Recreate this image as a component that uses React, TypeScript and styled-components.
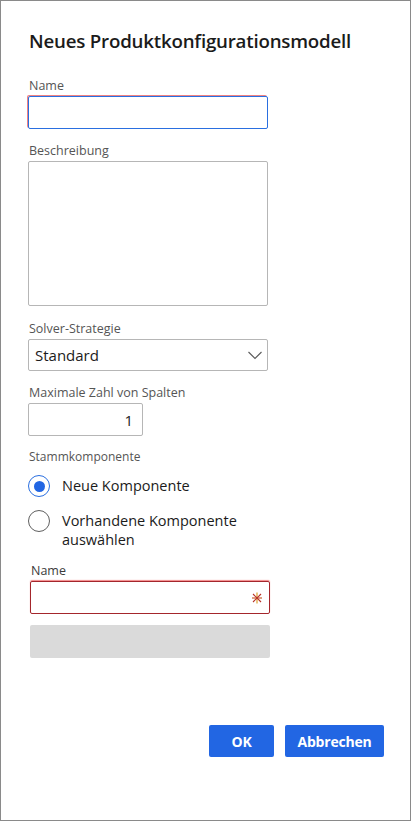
import React from 'react';
import styled, { createGlobalStyle } from 'styled-components';

const GlobalStyle = createGlobalStyle`
  html, body {
    margin: 0;
    padding: 0;
    background: #ffffff;
  }
  * {
    box-sizing: border-box;
  }
  body {
    font-family: "Open Sans", "Noto Sans", sans-serif;
    color: #1b1b1b;
  }
`;

const Dialog = styled.div`
  width: 411px;
  height: 821px;
  border: 1px solid #8a8a8a;
  background: #ffffff;
  display: flex;
  flex-direction: column;
  padding: 0 0 0 27px;
`;

const Title = styled.h1`
  margin: 26px 0 21px 1px;
  font-size: 18.7px;
  line-height: 28px;
  font-weight: 600;
  color: #1b1b1b;
  letter-spacing: -0.2px;
`;

const Field = styled.div<{ $gap?: number; $indent?: number }>`
  display: flex;
  flex-direction: column;
  margin-top: ${(p) => p.$gap ?? 0}px;
  margin-left: ${(p) => p.$indent ?? 0}px;
`;

const Label = styled.label<{ $dark?: boolean }>`
  font-size: 12.5px;
  line-height: 19px;
  color: ${(p) => (p.$dark ? '#3b3b3b' : '#555555')};
  margin-bottom: 1px;
  margin-left: 1px;
`;

const TextInput = styled.div<{ $width?: number; $state?: 'focus' | 'error' }>`
  position: relative;
  width: ${(p) => p.$width ?? 240}px;
  height: 33px;
  border-radius: 2px;
  border: 1px solid
    ${(p) => (p.$state === 'focus' ? '#2a6fe0' : p.$state === 'error' ? '#a4262c' : '#b6b6b6')};
  box-shadow: ${(p) =>
    p.$state === 'focus'
      ? '-1px -1px 0 0 rgba(235, 90, 90, 0.75)'
      : p.$state === 'error'
      ? '0 -1px 1px 0 rgba(235, 60, 60, 0.6)'
      : 'none'};
  display: flex;
  align-items: center;
  justify-content: flex-end;
  padding: 0 9px;
  font-size: 15px;
  color: #1b1b1b;
`;

const TextArea = styled.div`
  width: 240px;
  height: 145px;
  border: 1px solid #b6b6b6;
  border-radius: 2px;
`;

const Select = styled.div`
  width: 240px;
  height: 32px;
  border: 1px solid #b6b6b6;
  border-radius: 2px;
  display: flex;
  align-items: center;
  justify-content: space-between;
  padding: 0 4px 0 6px;
  font-size: 15px;
  color: #1b1b1b;
`;

const Legend = styled.div`
  font-size: 12px;
  line-height: 17px;
  color: #555555;
  margin-top: 12px;
  margin-left: 1px;
`;

const RadioGroup = styled.div`
  display: flex;
  flex-direction: column;
  gap: 13px;
  margin-top: 10px;
`;

const RadioRow = styled.div`
  display: flex;
  align-items: flex-start;
  gap: 12px;
`;

const RadioCircle = styled.span<{ $checked?: boolean }>`
  flex: none;
  width: 22px;
  height: 22px;
  border-radius: 50%;
  border: 1px solid ${(p) => (p.$checked ? '#2a6fe0' : '#5f5f5f')};
  display: flex;
  align-items: center;
  justify-content: center;
  &::after {
    content: '';
    width: 11px;
    height: 11px;
    border-radius: 50%;
    background: ${(p) => (p.$checked ? '#2266e3' : 'transparent')};
  }
`;

const RadioText = styled.span`
  font-size: 14.5px;
  line-height: 19px;
  color: #1b1b1b;
  padding-top: 1px;
  max-width: 200px;
`;

const Placeholder = styled.div`
  width: 240px;
  height: 33px;
  margin-top: 11px;
  margin-left: 2px;
  background: #dadada;
  border-radius: 2px;
`;

const Footer = styled.div`
  margin-top: auto;
  margin-bottom: 63px;
  padding-right: 26px;
  display: flex;
  justify-content: flex-end;
  gap: 11px;
`;

const Button = styled.button<{ $width: number }>`
  width: ${(p) => p.$width}px;
  height: 32px;
  border: none;
  border-radius: 2px;
  background: #2266e3;
  color: #ffffff;
  font-family: "Open Sans", "Noto Sans", sans-serif;
  font-size: 14px;
  font-weight: 700;
  letter-spacing: -0.2px;
  padding: 0;
`;

const Required = styled.svg`
  position: absolute;
  right: 6px;
  top: 10px;
`;

const Chevron = () => (
  <svg width="16" height="10" viewBox="0 0 16 10">
    <path d="M1.5 2 L8 8.5 L14.5 2" fill="none" stroke="#5a5a5a" strokeWidth="1.1" />
  </svg>
);

const Asterisk = () => (
  <Required width="12" height="12" viewBox="0 0 12 12">
    <line x1="6" y1="0.5" x2="6" y2="11.5" stroke="#d89a1a" strokeWidth="1.1" />
    <line x1="1" y1="6" x2="11" y2="6" stroke="#c4501c" strokeWidth="1.1" />
    <line x1="2" y1="2" x2="10" y2="10" stroke="#b8322a" strokeWidth="1.1" />
    <line x1="10" y1="2" x2="2" y2="10" stroke="#b8322a" strokeWidth="1.1" />
  </Required>
);

export default function App() {
  return (
    <>
      <GlobalStyle />
      <Dialog>
        <Title>Neues Produktkonfigurationsmodell</Title>

        <Field>
          <Label>Name</Label>
          <TextInput $state="focus" />
        </Field>

        <Field $gap={12}>
          <Label>Beschreibung</Label>
          <TextArea />
        </Field>

        <Field $gap={13}>
          <Label>Solver-Strategie</Label>
          <Select>
            <span>Standard</span>
            <Chevron />
          </Select>
        </Field>

        <Field $gap={12}>
          <Label>Maximale Zahl von Spalten</Label>
          <TextInput $width={115}>1</TextInput>
        </Field>

        <Legend>Stammkomponente</Legend>
        <RadioGroup>
          <RadioRow>
            <RadioCircle $checked />
            <RadioText>Neue Komponente</RadioText>
          </RadioRow>
          <RadioRow>
            <RadioCircle />
            <RadioText>Vorhandene Komponente auswählen</RadioText>
          </RadioRow>
        </RadioGroup>

        <Field $gap={12} $indent={2}>
          <Label $dark>Name</Label>
          <TextInput $state="error">
            <Asterisk />
          </TextInput>
        </Field>

        <Placeholder />

        <Footer>
          <Button $width={65}>OK</Button>
          <Button $width={99}>Abbrechen</Button>
        </Footer>
      </Dialog>
    </>
  );
}
